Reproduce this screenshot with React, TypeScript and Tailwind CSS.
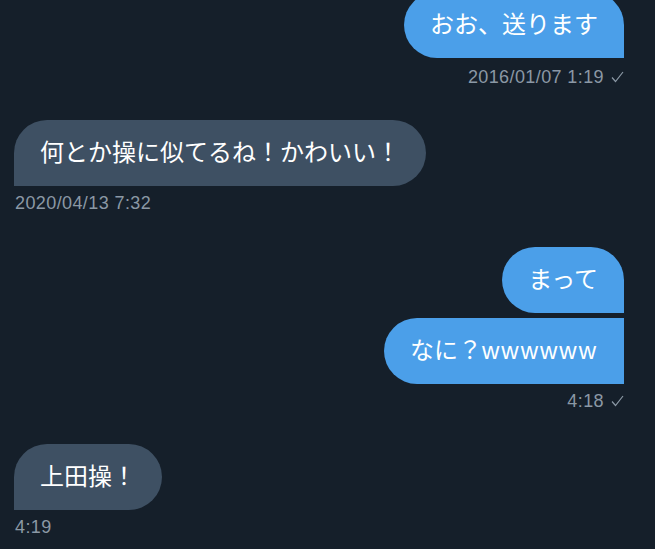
import { ReactNode } from 'react'

const font = { fontFamily: '"Liberation Sans", "Noto Sans CJK JP", sans-serif' }

function Check() {
  return (
    <svg width="13" height="12" viewBox="0 0 13 12" className="ml-[7px]">
      <polyline
        points="1,6.5 4.5,10.5 12,1"
        fill="none"
        stroke="#8b98a5"
        strokeWidth="1.2"
      />
    </svg>
  )
}

function Stamp({ text, sent, first }: { text: string; sent?: boolean; first?: boolean }) {
  return (
    <div
      className={`flex items-center text-[18px] leading-[20px] tracking-[0.4px] text-[#8b98a5] ${
        first ? 'mt-[9px]' : 'mt-[7px]'
      } ${sent ? 'justify-end' : 'justify-start pl-px'}`}
    >
      <span>{text}</span>
      {sent && <Check />}
    </div>
  )
}

function Bubble({
  children,
  sent,
  shape,
}: {
  children: ReactNode
  sent?: boolean
  shape: string
}) {
  return (
    <div className={`flex ${sent ? 'justify-end' : 'justify-start'}`}>
      <div
        className={`flex h-[66px] items-center whitespace-nowrap px-[26px] text-[24px] text-white ${
          sent ? 'bg-[#4b9fe9]' : 'bg-[#3e5063]'
        } ${shape}`}
      >
        {children}
      </div>
    </div>
  )
}

export default function App() {
  return (
    <div
      className="h-[549px] w-[655px] overflow-hidden bg-[#151f2a] pl-[14px] pr-[31px]"
      style={font}
    >
      <div className="-mt-[8px]">
        <Bubble sent shape="rounded-l-[33px] rounded-tr-[33px]">
          おお、送ります
        </Bubble>
        <Stamp text="2016/01/07 1:19" sent first />
      </div>

      <div className="mt-[33px]">
        <Bubble shape="rounded-r-[33px] rounded-tl-[33px]">
          何とか操に似てるね！かわいい！
        </Bubble>
        <Stamp text="2020/04/13 7:32" />
      </div>

      <div className="mt-[34px]">
        <Bubble sent shape="rounded-l-[33px] rounded-tr-[33px]">
          まって
        </Bubble>
        <div className="h-[5px]" />
        <Bubble sent shape="rounded-l-[33px]">
          なに？<span className="tracking-[2px]">wwwwww</span>
        </Bubble>
        <Stamp text="4:18" sent />
      </div>

      <div className="mt-[33px]">
        <Bubble shape="rounded-r-[33px] rounded-tl-[33px]">上田操！</Bubble>
        <Stamp text="4:19" />
      </div>
    </div>
  )
}
